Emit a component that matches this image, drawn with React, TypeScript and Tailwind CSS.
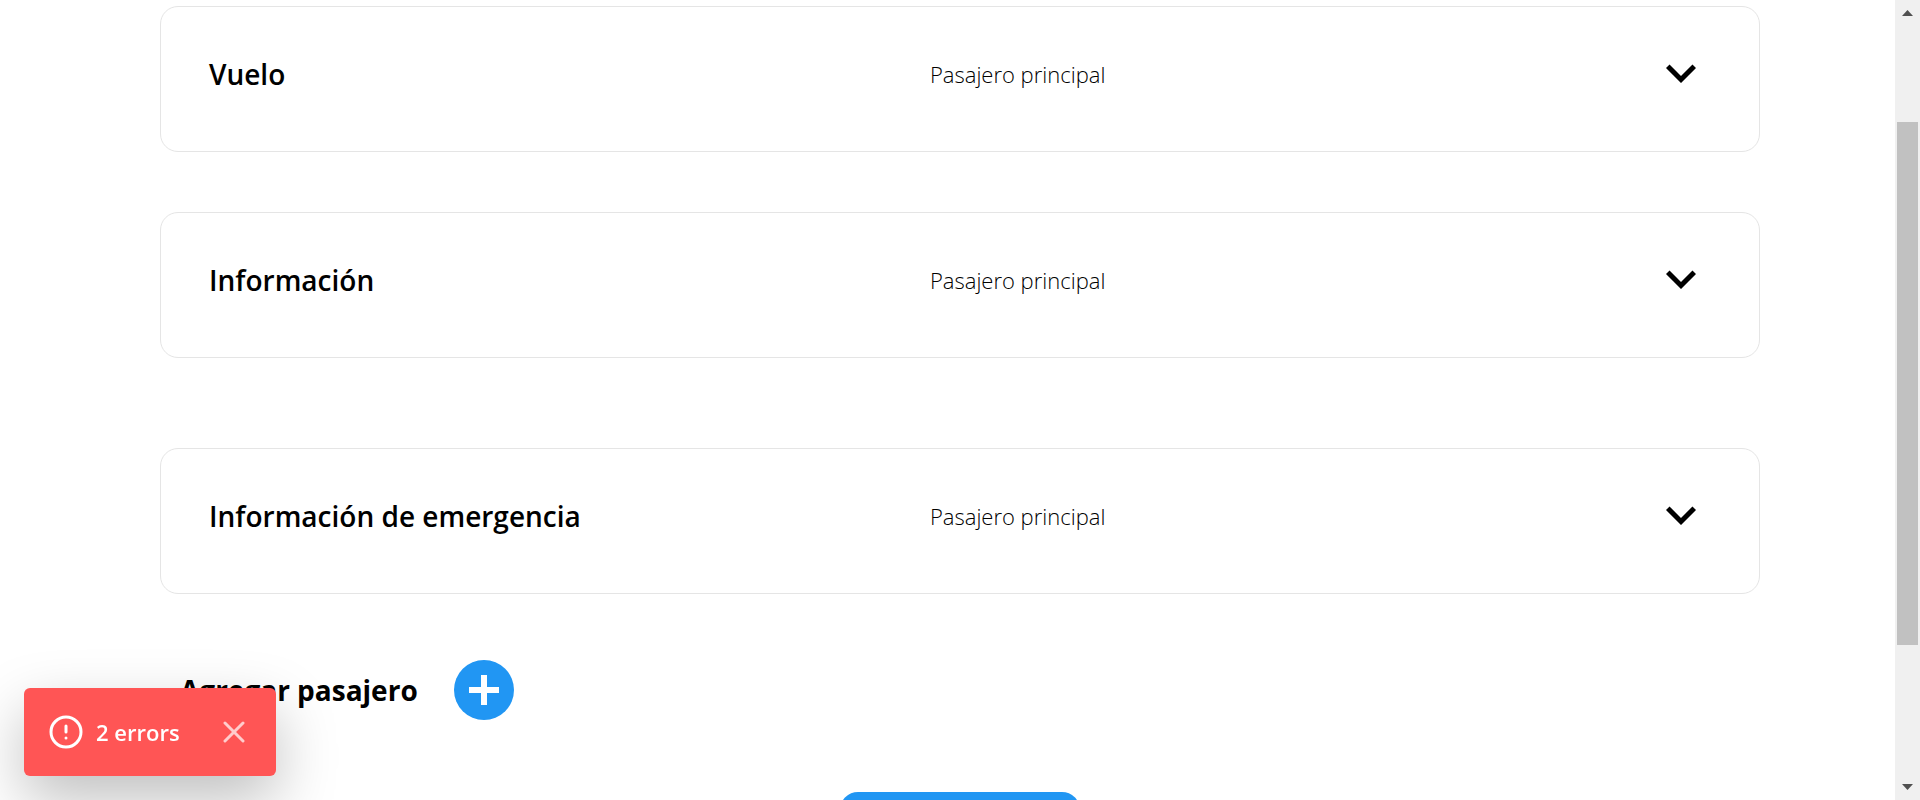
import React from "react";
import { CircleAlert, X } from "lucide-react";

function ChevronDown() {
  return (
    <svg viewBox="0 0 24 24" className="size-15" fill="currentColor" aria-hidden="true">
      <path d="M7.41 8.59 12 13.17l4.59-4.58L18 10l-6 6-6-6 1.41-1.41z" />
    </svg>
  );
}

function Panel({ title, subtitle }: { title: string; subtitle: string }) {
  return (
    <section className="grid grid-cols-[48%_1fr_auto] items-center rounded-[18px] border border-[#e5e5e5] px-12 pt-9 pb-12">
      <h2 className="pt-0.5 text-[28px] leading-10 font-semibold">{title}</h2>
      <p className="pt-0.5 text-[22px] leading-10 font-light">{subtitle}</p>
      <button type="button" aria-label={title}>
        <ChevronDown />
      </button>
    </section>
  );
}

function ErrorToast() {
  return (
    <div className="fixed bottom-6 left-6 flex items-center rounded-md bg-[#ff5555] px-6 py-[26px] text-white shadow-[0_24px_60px_rgba(0,0,0,0.25)]">
      <CircleAlert className="mr-3 size-9" strokeWidth={2} aria-hidden="true" />
      <span className="text-[22px] leading-9 font-semibold">2 errors</span>
      <button type="button" aria-label="Close" className="ml-9 opacity-70">
        <X className="size-9" strokeWidth={2} />
      </button>
    </div>
  );
}

function ScrollTrack() {
  return (
    <div className="fixed inset-y-0 right-0 flex w-[25px] flex-col items-center justify-between bg-[#f0f0f0] py-[10px]" aria-hidden="true">
      <svg viewBox="0 0 11 6" className="h-[6px] w-[11px]" fill="#505050">
        <path d="M5.500 0 11 6H0z" />
      </svg>
      <div className="mt-[106px] mb-auto h-[67%] w-[21px] shrink-0 bg-[#c1c1c1]" />
      <svg viewBox="0 0 11 6" className="h-[6px] w-[11px]" fill="#505050">
        <path d="M0 0h11L5.500 6z" />
      </svg>
    </div>
  );
}

export default function App() {
  return (
    <div className="h-screen overflow-hidden bg-white font-['Open_Sans','Noto_Sans',sans-serif] text-black">
      <main className="flex flex-col px-40 pt-[6px]">
        <Panel title="Vuelo" subtitle="Pasajero principal" />
        <div className="mt-15 mb-[90px]">
          <Panel title="Información" subtitle="Pasajero principal" />
        </div>
        <Panel title="Información de emergencia" subtitle="Pasajero principal" />
        <div className="mt-[66px] flex items-center gap-9 pl-5">
          <span className="text-[28px] leading-10 font-bold">Agregar pasajero</span>
          <button
            type="button"
            aria-label="Agregar pasajero"
            className="flex size-15 items-center justify-center rounded-full bg-[#2196f3] text-white"
          >
            <svg viewBox="0 0 30 30" className="size-[30px]" fill="currentColor" aria-hidden="true">
              <path d="M12 0h6v12h12v6H18v12h-6V18H0v-6h12z" />
            </svg>
          </button>
        </div>
        <button
          type="button"
          aria-label="Continuar"
          className="mt-[72px] h-15 w-60 self-center rounded-[18px] bg-[#2196f3]"
        />
      </main>
      <ErrorToast />
      <ScrollTrack />
    </div>
  );
}
